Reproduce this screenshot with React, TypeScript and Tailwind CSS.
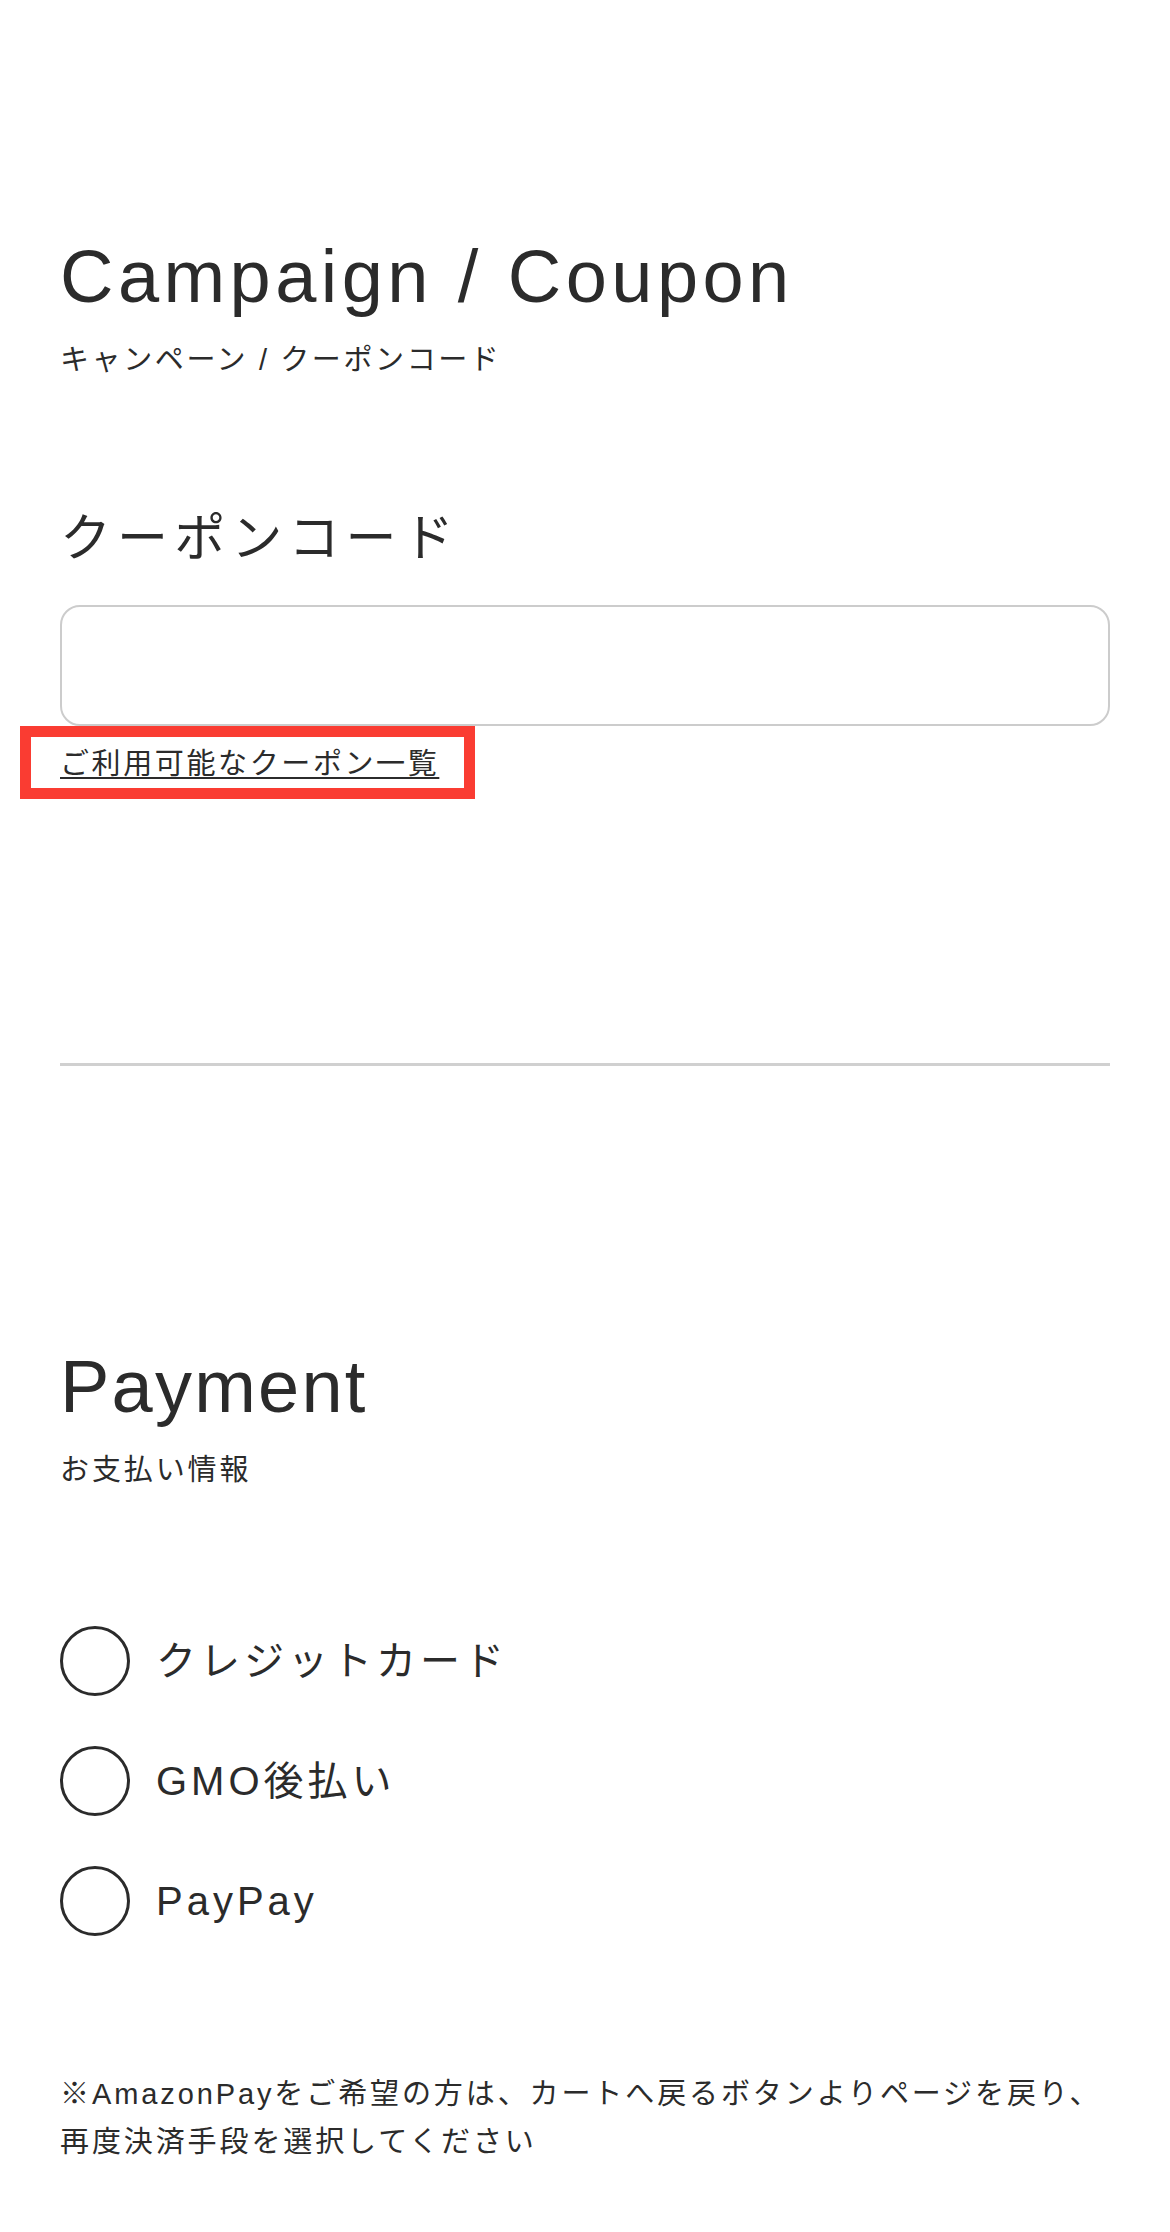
export default function App() {
  const methods = ["クレジットカード", "GMO後払い", "PayPay"];

  return (
    <div className="min-h-[2232px] bg-white px-[60px] pt-[240px] font-['Liberation_Sans','Noto_Sans_CJK_JP',sans-serif] text-[#2b2b2b]">
      {/* campaign / coupon */}
      <section>
        <h1 className="text-[74px] leading-none tracking-[0.06em]">Campaign / Coupon</h1>
        <p className="mt-8 text-[29px] leading-none tracking-[0.09em]">キャンペーン / クーポンコード</p>

        <h2 className="mt-[138px] text-[51px] leading-none tracking-[0.12em]">クーポンコード</h2>
        <input
          type="text"
          className="mt-[41px] block h-[121px] w-full rounded-[20px] border-2 border-[#cccccc] bg-white px-6 text-[28px] outline-none"
        />

        <div className="relative mt-6 text-[29px] leading-none">
          <span className="absolute -left-[40px] -top-[24px] h-[73px] w-[455px] border-[11px] border-[#fa3c32]" />
          <a href="#" className="relative tracking-[0.09em] underline underline-offset-[3px]">
            ご利用可能なクーポン一覧
          </a>
        </div>
      </section>

      <hr className="mt-[284px] h-[3px] border-0 bg-[#d0d0d0]" />

      {/* payment */}
      <section className="mt-[284px]">
        <h1 className="text-[74px] leading-none tracking-[0.03em]">Payment</h1>
        <p className="mt-8 text-[29px] leading-none tracking-[0.1em]">お支払い情報</p>

        <div className="mt-[141px] flex flex-col gap-[50px]">
          {methods.map((m) => (
            <label key={m} className="flex items-center gap-[26px]">
              <span className="h-[70px] w-[70px] shrink-0 rounded-full border-[3px] border-[#2b2b2b]" />
              <span className="text-[40px] leading-none tracking-[0.1em]">{m}</span>
            </label>
          ))}
        </div>

        <p className="mt-[134px] text-[29px] leading-[48px] tracking-[0.1em]">
          ※AmazonPayをご希望の方は、カートへ戻るボタンよりページを戻り、
          <br />
          再度決済手段を選択してください
        </p>
      </section>
    </div>
  );
}
